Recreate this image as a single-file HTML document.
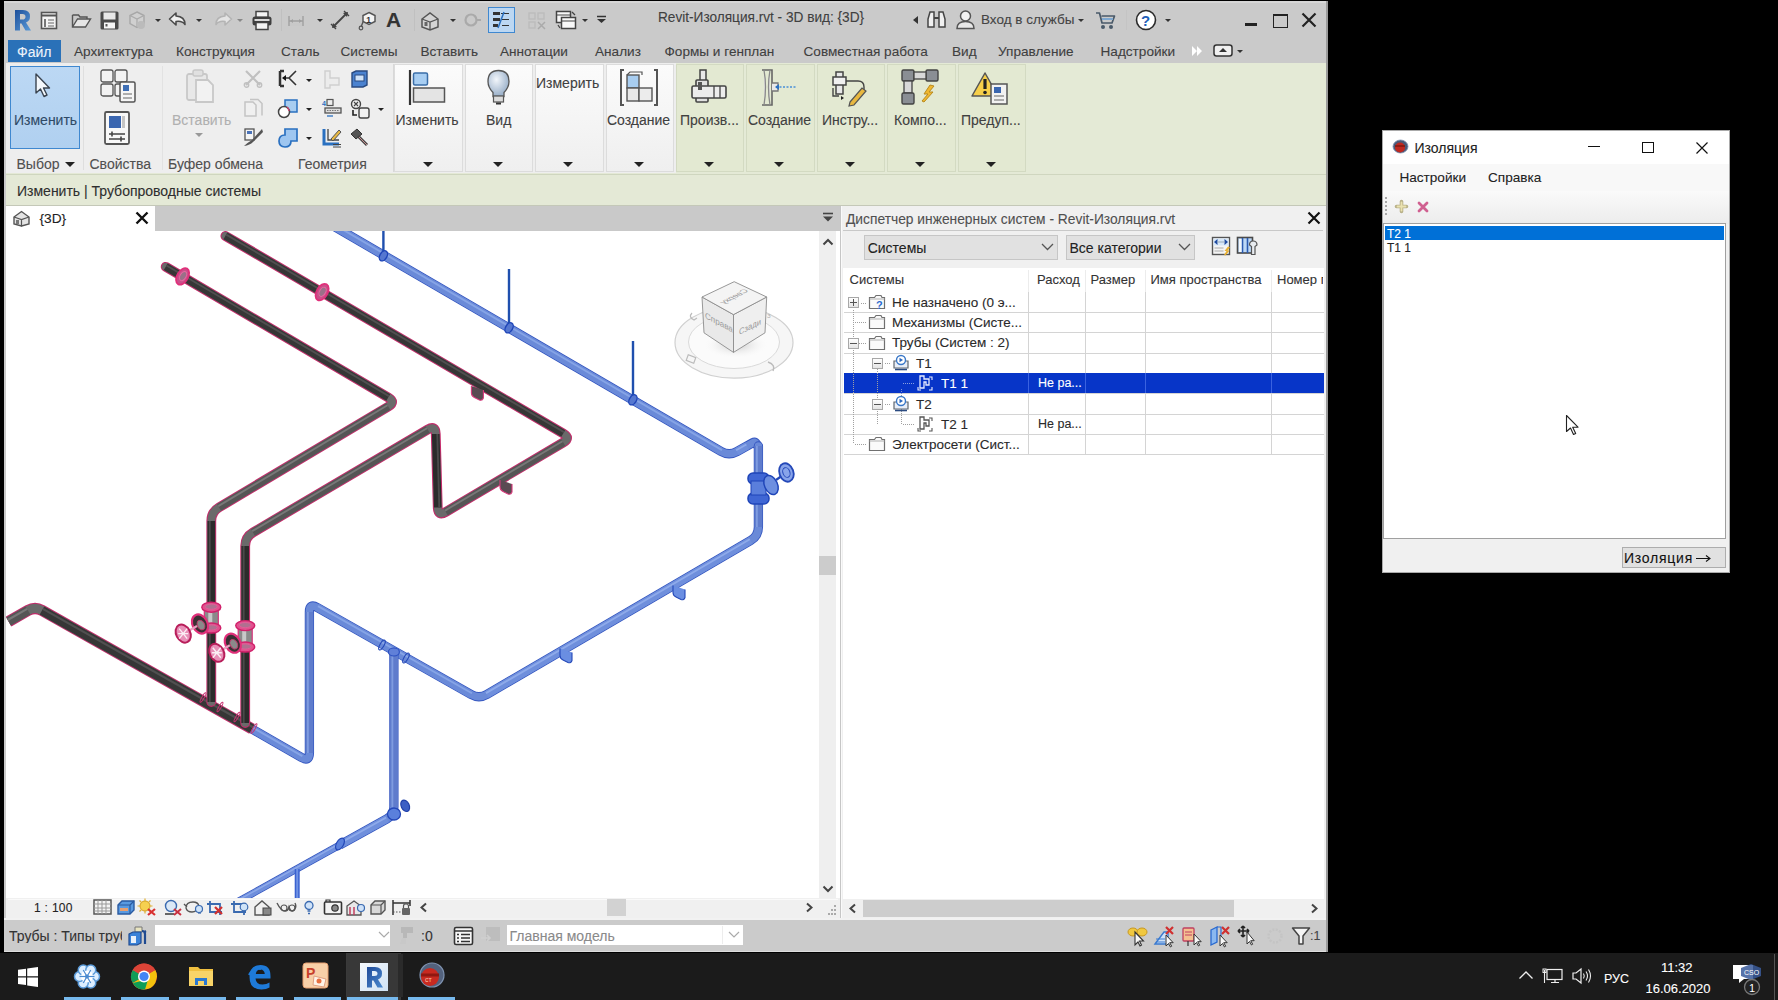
<!DOCTYPE html>
<html><head><meta charset="utf-8">
<style>
*{margin:0;padding:0;box-sizing:border-box}
html,body{width:1778px;height:1000px;overflow:hidden;background:#000;font-family:"Liberation Sans",sans-serif;color:#333}
.a{position:absolute}
.t{position:absolute;white-space:nowrap;line-height:1;color:#3a3a3a;-webkit-text-stroke:0.1px currentColor}
svg{position:absolute;overflow:visible}
.tab{font-size:13.6px;top:44.7px;color:#404040}
.pl{font-size:14px;top:156.5px;color:#505050}
.bl{font-size:14px;top:113.2px;color:#404040}
.pn{position:absolute;top:64px;height:108px;background:linear-gradient(#fbfbfb,#efefef);border:1px solid #dcdcdc}
.pg{position:absolute;top:64px;height:108px;background:#e3e9d2;border:1px solid #d3dac2}
.dd{position:absolute;width:0;height:0;border-left:5px solid transparent;border-right:5px solid transparent;border-top:5px solid #222}
.row{position:absolute;left:844px;width:480px;height:1px;background:#d6d6d6}
.rt{font-size:14px;color:#333}
</style></head><body>
<!-- ===== REVIT WINDOW ===== -->
<div class="a" style="left:4px;top:1px;width:1322px;height:951px;background:#cacaca"></div><div class="a" style="left:4px;top:1px;width:1322px;height:2px;background:#d6d6d6"></div>
<div class="a" style="left:1326px;top:1px;width:2px;height:951px;background:#9a9a9a"></div>

<!-- title -->
<div class="t" style="left:657.5px;top:9.8px;font-size:14.5px;color:#404040;transform:scaleX(0.94);transform-origin:0 0">Revit-Изоляция.rvt - 3D вид: {3D}</div>


<svg style="left:13px;top:8px" width="20" height="24"><defs><linearGradient id="rg" x1="0" y1="0" x2="1" y2="1"><stop offset="0" stop-color="#1d4f9a"/><stop offset="1" stop-color="#5a9ad8"/></linearGradient></defs><path d="M2,2 h8 q7,0 7,6.5 q0,4.5 -4,6 l5,8 h-5.5 l-4,-7 h-1.5 v7 h-5 z M7,6 v5.5 h2.5 q3,0 3,-2.8 q0,-2.7 -3,-2.7 z" fill="url(#rg)"/></svg>
<svg style="left:40px;top:11px" width="19" height="19"><rect x="1.5" y="1.5" width="15" height="16" fill="#f4f4f4" stroke="#555" stroke-width="1.6"/><path d="M1.5,4.5 h15" stroke="#555" stroke-width="2"/><path d="M5,8 v8" stroke="#777" stroke-width="2"/><path d="M8,9 h6 M8,12 h6 M8,15 h6" stroke="#666" stroke-width="1.2"/></svg>
<svg style="left:71px;top:12px" width="22" height="17"><path d="M1.5,3 h6 l1.5,2 h7 v3" fill="none" stroke="#555" stroke-width="1.4"/><path d="M1.5,3 v12 h13 l5,-8 h-13 l-5,8" fill="#e6e6e6" stroke="#555" stroke-width="1.4"/></svg>
<svg style="left:99px;top:10px" width="21" height="21"><rect x="1.5" y="1.5" width="18" height="18" rx="1.5" fill="#4a4a4a"/><rect x="4.5" y="2.5" width="12" height="7" fill="#e8e8e8"/><rect x="5" y="12.5" width="11" height="6" fill="#f6f6f6"/><rect x="6.5" y="14" width="2" height="2.5" fill="#555"/></svg>
<svg style="left:127px;top:10px" width="21" height="20"><path d="M10,2 l7,3.5 v8 l-7,4 l-7,-4 v-8 z" fill="#d0d0d0" stroke="#a8a8a8" stroke-width="1.4"/><path d="M3,5.5 l7,3.5 l7,-3.5 M10,9 v8.5" fill="none" stroke="#aaa" stroke-width="1.2"/><circle cx="14" cy="15" r="4" fill="#bbb"/></svg>
<div class="dd" style="left:155px;top:19px;border-width:3px 3px 0 3px;border-top-color:#333"></div>
<svg style="left:168px;top:11px" width="21" height="17"><path d="M8,2 l-6.5,6 l6.5,6 v-3.5 q6,-1 9,3 q0,-8 -9,-8.5 z" fill="#f0f0f0" stroke="#4a4a4a" stroke-width="1.6" stroke-linejoin="round"/></svg>
<div class="dd" style="left:196px;top:19px;border-width:3px 3px 0 3px;border-top-color:#333"></div>
<svg style="left:212px;top:11px" width="21" height="17"><path d="M13,2 l6.5,6 l-6.5,6 v-3.5 q-6,-1 -9,3 q0,-8 9,-8.5 z" fill="#e4e4e4" stroke="#b4b4b4" stroke-width="1.6" stroke-linejoin="round"/></svg>
<div class="dd" style="left:237px;top:19px;border-width:3px 3px 0 3px;border-top-color:#888"></div>
<svg style="left:251px;top:10px" width="22" height="21"><rect x="5" y="1.5" width="12" height="6" fill="#f4f4f4" stroke="#444" stroke-width="1.5"/><rect x="1.5" y="6.5" width="19" height="9" rx="2.5" fill="#3f3f3f"/><rect x="5" y="12.5" width="12" height="7" fill="#f4f4f4" stroke="#444" stroke-width="1.5"/><rect x="3.5" y="9" width="15" height="2" fill="#d8d8d8"/></svg>
<div class="a" style="left:281px;top:9px;width:1px;height:22px;background:#c0c0c0"></div>
<svg style="left:288px;top:13px" width="16" height="15"><path d="M1,3 v10 M15,3 v10 M1,8 h14" stroke="#a0a0a0" stroke-width="1.4" fill="none"/><path d="M2,8 l3,-2 v4z M14,8 l-3,-2 v4z" fill="#a0a0a0"/><rect x="2" y="10" width="12" height="3" fill="#c8c8c8"/></svg>
<div class="dd" style="left:317px;top:19px;border-width:3px 3px 0 3px;border-top-color:#333"></div>
<svg style="left:330px;top:10px" width="20" height="20"><path d="M3,17 l14,-14" stroke="#444" stroke-width="1.8"/><path d="M2,18 l1,-5 l4,4z M18,2 l-1,5 l-4,-4z" fill="#444"/><path d="M1,14 l5,5 M14,1 l5,5" stroke="#444" stroke-width="1.4"/></svg>
<svg style="left:358px;top:11px" width="20" height="19"><path d="M11,1.5 l6,3 v6 l-6,3 l-6,-3 v-6z" fill="#f4f4f4" stroke="#555" stroke-width="1.5"/><text x="8.3" y="11.5" font-family="Liberation Sans" font-size="8.5" font-weight="bold" fill="#333">1</text><path d="M5,11 l-2,5" stroke="#555" stroke-width="1.4"/><circle cx="3" cy="17" r="1.8" fill="none" stroke="#555" stroke-width="1.2"/></svg>
<div class="t" style="left:386px;top:9px;font-size:21px;font-weight:bold;color:#333">A</div>
<div class="a" style="left:414px;top:9px;width:1px;height:22px;background:#c0c0c0"></div>
<svg style="left:420px;top:11px" width="20" height="19"><path d="M2,8 l8,-6 l8,6 v8 l-8,3 l-8,-3z" fill="#d4d4d4" stroke="#555" stroke-width="1.5"/><path d="M2,8 l8,3 l8,-3 M10,11 v8" fill="none" stroke="#555" stroke-width="1.3"/><rect x="4.5" y="11" width="3" height="4" fill="#666"/></svg>
<div class="dd" style="left:450px;top:19px;border-width:3px 3px 0 3px;border-top-color:#333"></div>
<svg style="left:464px;top:12px" width="18" height="16"><circle cx="7" cy="8" r="5.5" fill="none" stroke="#aaa" stroke-width="2.2"/><path d="M12,8 l5,0" stroke="#aaa" stroke-width="2"/></svg>
<div class="a" style="left:488px;top:7px;width:27px;height:26px;background:#bcd7f2;border:1px solid #3f88d0"></div>
<svg style="left:491px;top:11px" width="21" height="18"><path d="M2,2.5 h7 M2,8.5 h7 M2,14.5 h5" stroke="#333" stroke-width="3"/><path d="M10,2.5 h8 M11,8.5 h7 M11,14.5 h7" stroke="#333" stroke-width="1.2"/><path d="M13,1 l-6,16" stroke="#2a70c0" stroke-width="1.5"/></svg>
<svg style="left:527px;top:11px" width="20" height="19"><rect x="2" y="2" width="6" height="6" fill="none" stroke="#bbb" stroke-width="1.3"/><rect x="11" y="2" width="6" height="6" fill="none" stroke="#bbb" stroke-width="1.3"/><rect x="2" y="11" width="6" height="6" fill="none" stroke="#bbb" stroke-width="1.3"/><path d="M11,11 l7,7 M18,11 l-7,7" stroke="#aaa" stroke-width="1.5"/></svg>
<svg style="left:555px;top:10px" width="22" height="21"><rect x="1.5" y="1.5" width="14" height="11" fill="#f8f8f8" stroke="#444" stroke-width="1.5"/><rect x="6.5" y="7.5" width="14" height="11" fill="#f8f8f8" stroke="#444" stroke-width="1.5"/><path d="M1.5,5 h14 M6.5,11 h14" stroke="#444" stroke-width="1.2"/><path d="M17,2 l3,3 M3,15 l2,3" stroke="#444" stroke-width="1.3"/></svg>
<div class="dd" style="left:582px;top:19px;border-width:3px 3px 0 3px;border-top-color:#333"></div>
<svg style="left:596px;top:15px" width="11" height="9"><path d="M1,1.5 h9" stroke="#333" stroke-width="1.5"/><path d="M1,4 h9 l-4.5,4z" fill="#333"/></svg>
<div class="dd" style="left:914px;top:17px;border-width:0px 0px 0 0px;border-top-color:#333"></div>
<svg style="left:912px;top:15px" width="7" height="10"><path d="M6,1 l-5,4 l5,4z" fill="#333"/></svg>
<svg style="left:926px;top:10px" width="21" height="19"><path d="M2,17 v-8 l2,-7 h4 v15z M19,17 v-8 l-2,-7 h-4 v15z" fill="#f0f0f0" stroke="#444" stroke-width="1.5"/><path d="M8,8 h5" stroke="#444" stroke-width="2"/></svg>
<svg style="left:955px;top:9px" width="21" height="21"><circle cx="10.5" cy="7" r="5" fill="#f2f2f2" stroke="#555" stroke-width="1.5"/><path d="M2,19.5 q0,-7 8.5,-7 q8.5,0 8.5,7z" fill="#e8e8e8" stroke="#555" stroke-width="1.5"/></svg>
<div class="t" style="left:981px;top:12.5px;font-size:13.5px;color:#444">Вход в службы</div>
<div class="dd" style="left:1078px;top:19px;border-width:3px 3px 0 3px;border-top-color:#333"></div>
<svg style="left:1095px;top:11px" width="22" height="19"><path d="M1,2 h3.5 l2.5,10 h10 l2.5,-7 h-13" fill="none" stroke="#4a5a6a" stroke-width="1.7" stroke-linejoin="round"/><circle cx="8" cy="16" r="2" fill="#4a5a6a"/><circle cx="16" cy="16" r="2" fill="#4a5a6a"/><path d="M7,8 h11" stroke="#7fa8d0" stroke-width="2"/></svg>
<div class="a" style="left:1126px;top:10px;width:1px;height:20px;background:#c4c4c4"></div>
<svg style="left:1135px;top:9px" width="22" height="22"><circle cx="11" cy="11" r="9.5" fill="#fff" stroke="#2a2a2a" stroke-width="1.6"/><text x="6" y="16.5" font-family="Liberation Sans" font-size="15" font-weight="bold" fill="#1f5fb8">?</text></svg>
<div class="dd" style="left:1165px;top:19px;border-width:3px 3px 0 3px;border-top-color:#333"></div>
<div class="a" style="left:1245px;top:23px;width:12px;height:3px;background:#222"></div>
<div class="a" style="left:1273px;top:14px;width:15px;height:14px;border:1.6px solid #222;border-top-width:2.4px"></div>
<svg style="left:1301px;top:12px" width="16" height="16"><path d="M1.5,1.5 l13,13 M14.5,1.5 l-13,13" stroke="#222" stroke-width="2.2"/></svg>
<svg style="left:1191px;top:45px" width="13" height="12"><path d="M1,1 l5,5 l-5,5z M6,1 l5,5 l-5,5z" fill="#fff"/></svg>
<svg style="left:1213px;top:44px" width="20" height="13"><rect x="1" y="1" width="18" height="11" rx="2.5" fill="#f0f0f0" stroke="#333" stroke-width="1.5"/><path d="M6,8 l4,-4 l4,4z" fill="#333"/></svg>
<div class="dd" style="left:1237px;top:50px;border-width:3px 3px 0 3px;border-top-color:#333"></div>
<!-- tabs row -->
<div class="a" style="left:8px;top:40px;width:53px;height:22px;background:#2a71b8"></div>
<div class="t" style="left:17px;top:44.7px;font-size:14px;color:#eef4fb">Файл</div>
<div class="t tab" style="left:74px">Архитектура</div>
<div class="t tab" style="left:176px">Конструкция</div>
<div class="t tab" style="left:281px">Сталь</div>
<div class="t tab" style="left:340.5px">Системы</div>
<div class="t tab" style="left:420.5px">Вставить</div>
<div class="t tab" style="left:500px">Аннотации</div>
<div class="t tab" style="left:595px">Анализ</div>
<div class="t tab" style="left:664.5px">Формы и генплан</div>
<div class="t tab" style="left:803.5px">Совместная работа</div>
<div class="t tab" style="left:952px">Вид</div>
<div class="t tab" style="left:998px">Управление</div>
<div class="t tab" style="left:1100.5px">Надстройки</div>

<!-- ribbon -->
<div class="a" style="left:6px;top:63px;width:670px;height:110px;background:#eeeeee"></div>
<div class="a" style="left:676px;top:63px;width:650px;height:110px;background:#e4ead6"></div>
<div class="a" style="left:83px;top:66px;width:1px;height:104px;background:#dedede"></div>
<div class="a" style="left:162px;top:66px;width:1px;height:104px;background:#e2e2e2"></div>
<div class="a" style="left:393px;top:64px;width:1px;height:108px;background:#d8d8d8"></div>
<!-- selected Изменить -->
<div class="a" style="left:10px;top:66px;width:70px;height:83px;background:linear-gradient(#bcd8f4,#b0d0f0);border:1px solid #3f88d0"></div>
<div class="t bl" style="left:14px;color:#2f4a66">Изменить</div>
<div class="t pl" style="left:16.5px">Выбор</div>
<div class="dd" style="left:65px;top:162px"></div>
<div class="t pl" style="left:89.5px">Свойства</div>
<div class="t" style="left:172px;top:113.2px;font-size:14px;color:#b0b0b0">Вставить</div>
<div class="dd" style="left:195px;top:133px;border-top-color:#999;border-width:4px 4px 0 4px"></div>
<div class="t pl" style="left:168px">Буфер обмена</div>
<div class="t pl" style="left:298px">Геометрия</div>

<!-- collapsed panels -->
<div class="pn" style="left:394px;width:69px"></div>
<div class="pn" style="left:465px;width:68px"></div>
<div class="pn" style="left:535px;width:69px"></div>
<div class="pn" style="left:606px;width:68px"></div>
<div class="t bl" style="left:395.5px">Изменить</div>
<div class="t bl" style="left:486px">Вид</div>
<div class="t" style="left:536px;top:76.4px;font-size:14px;color:#404040">Измерить</div>
<div class="t bl" style="left:607px">Создание</div>
<div class="pg" style="left:676px;width:68px"></div>
<div class="pg" style="left:746px;width:69px"></div>
<div class="pg" style="left:817px;width:68px"></div>
<div class="pg" style="left:887px;width:69px"></div>
<div class="pg" style="left:958px;width:68px"></div>
<div class="t bl" style="left:680px">Произв...</div>
<div class="t bl" style="left:748px">Создание</div>
<div class="t bl" style="left:822px">Инстру...</div>
<div class="t bl" style="left:894px">Компо...</div>
<div class="t bl" style="left:961px">Предуп...</div>
<div class="dd" style="left:423px;top:162px"></div>
<div class="dd" style="left:493px;top:162px"></div>
<div class="dd" style="left:563px;top:162px"></div>
<div class="dd" style="left:634px;top:162px"></div>
<div class="dd" style="left:704px;top:162px"></div>
<div class="dd" style="left:774px;top:162px"></div>
<div class="dd" style="left:845px;top:162px"></div>
<div class="dd" style="left:915px;top:162px"></div>
<div class="dd" style="left:986px;top:162px"></div>

<svg style="left:34px;top:72px" width="20" height="26"><path d="M2,2 v19 l4.5,-4 l3.5,7.5 l3,-1.5 l-3.5,-7 h6z" fill="#f4f8fc" stroke="#3a4450" stroke-width="1.4" stroke-linejoin="round"/></svg>
<svg style="left:99px;top:68px" width="40" height="36"><g fill="#f2f2f2" stroke="#555" stroke-width="1.3"><rect x="2" y="2" width="12" height="12" rx="2"/><rect x="16" y="2" width="12" height="12" rx="2"/><rect x="2" y="16" width="12" height="12" rx="2"/><rect x="16" y="16" width="12" height="12" rx="2"/></g><rect x="21" y="14" width="15" height="20" rx="1.5" fill="#f6f6f6" stroke="#555" stroke-width="1.5"/><rect x="24" y="17" width="6" height="6" fill="#3f6fb5"/><path d="M24,26 h9 M24,30 h9" stroke="#666" stroke-width="1.2"/></svg>
<svg style="left:103px;top:110px" width="28" height="36"><rect x="2" y="2" width="24" height="32" rx="1.5" fill="#f8f8f8" stroke="#555" stroke-width="1.8"/><rect x="6" y="6" width="12" height="12" fill="#3a66b0"/><rect x="19" y="6" width="3" height="12" fill="#c4c4c4"/><path d="M6,24 h16 M6,29 h16" stroke="#444" stroke-width="1.6"/><path d="M9,21.5 v5 M18,26.5 v5" stroke="#444" stroke-width="1.6"/></svg>
<svg style="left:184px;top:68px" width="32" height="37"><rect x="3" y="6" width="20" height="26" rx="2" fill="#e8e8e8" stroke="#c8c8c8" stroke-width="1.8"/><rect x="9" y="2" width="10" height="6" rx="2" fill="#e0e0e0" stroke="#c8c8c8" stroke-width="1.5"/><path d="M12,12 h12 l5,5 v17 h-17z" fill="#f2f2f2" stroke="#c8c8c8" stroke-width="1.8"/></svg>
<svg style="left:243px;top:69px" width="20" height="19"><path d="M3,2 l14,14 M17,2 l-14,14" stroke="#c0c0c0" stroke-width="2.2"/><circle cx="3.5" cy="16" r="2.2" fill="none" stroke="#c0c0c0" stroke-width="1.4"/><circle cx="16.5" cy="16" r="2.2" fill="none" stroke="#c0c0c0" stroke-width="1.4"/></svg>
<svg style="left:243px;top:98px" width="21" height="20"><path d="M2,4 h8 l3,3 v11 h-11z" fill="#f0f0f0" stroke="#c4c4c4" stroke-width="1.5"/><path d="M7,1.5 h8 l4,4 v12" fill="none" stroke="#c4c4c4" stroke-width="1.5"/></svg>
<svg style="left:243px;top:127px" width="21" height="20"><rect x="2" y="2" width="9" height="11" fill="#f4f4f4" stroke="#555" stroke-width="1.3"/><rect x="4" y="4" width="5" height="3" fill="#4a72b8"/><path d="M19,2 l-10,11 q-5,3 -8,6 q6,-1 9,-4 l10,-10z" fill="#555"/></svg>
<svg style="left:277px;top:69px" width="22" height="19"><path d="M3,2 v15 M3,2 h4 M3,17 h4" stroke="#333" stroke-width="2.5"/><path d="M6,9 h6 l7,-7 M12,9 l7,7" stroke="#333" stroke-width="1.6" fill="none"/><path d="M5,9 l4,-3 v6z" fill="#111"/></svg>
<svg style="left:277px;top:98px" width="22" height="21"><rect x="8" y="2" width="12" height="12" fill="#a8cdf0" stroke="#2a70c0" stroke-width="1.5"/><circle cx="7" cy="14" r="5.5" fill="#fff" stroke="#444" stroke-width="1.5"/><path d="M10,9 a5.5,5.5 0 0 1 2,4" stroke="#d04070" stroke-width="1.3" fill="none"/></svg>
<svg style="left:277px;top:127px" width="22" height="21"><path d="M8,2 h12 v12 h-6 q0,6 -6,6 q-6,0 -6,-6 q0,-6 6,-6z" fill="#9ec6f0" stroke="#2a70c0" stroke-width="1.7"/></svg>
<div class="dd" style="left:306px;top:79px;border-width:3px 3px 0 3px;border-top-color:#222"></div>
<div class="dd" style="left:306px;top:108px;border-width:3px 3px 0 3px;border-top-color:#222"></div>
<div class="dd" style="left:306px;top:137px;border-width:3px 3px 0 3px;border-top-color:#222"></div>
<svg style="left:321px;top:69px" width="22" height="20"><path d="M4,2 h5 v7 h9 v7 h-9 v3 h-5z" fill="#ececec" stroke="#cfcfcf" stroke-width="1.4"/></svg>
<svg style="left:321px;top:98px" width="22" height="21"><text x="1" y="8" font-family="Liberation Sans" font-size="7" font-weight="bold" fill="#2a70c0">4</text><rect x="6" y="1.5" width="6" height="6" fill="none" stroke="#555" stroke-width="1.2"/><rect x="4" y="10" width="16" height="5" fill="#ddd" stroke="#555" stroke-width="1.3"/><path d="M6,12.5 h12" stroke="#777" stroke-dasharray="1.5 1"/><path d="M6,18 h6" stroke="#2a70c0" stroke-width="1.3"/></svg>
<svg style="left:321px;top:127px" width="22" height="21"><path d="M3,2 v15 h15" stroke="#2a70c0" stroke-width="3" fill="none"/><path d="M7,2 v11 h11" stroke="#444" stroke-width="1.3" fill="none"/><path d="M10,12 l8,-9 l2,2 l-8,9z" fill="#e8b840" stroke="#555" stroke-width="1"/><path d="M12,17.5 h8 M12,20 h8" stroke="#444" stroke-width="1.2"/></svg>
<svg style="left:349px;top:69px" width="22" height="20"><path d="M3,4 l4,-2 h11 v14 l-4,2 h-11z" fill="#4a82d0" stroke="#2a4a80" stroke-width="1.4"/><rect x="6" y="6" width="9" height="6" fill="#cfe2f8" stroke="#2a4a80" stroke-width="1"/></svg>
<svg style="left:349px;top:98px" width="22" height="21"><circle cx="7" cy="6" r="4.5" fill="none" stroke="#444" stroke-width="1.4"/><path d="M5,4 l4,4 M9,4 l-4,4" stroke="#444" stroke-width="1.1"/><rect x="10" y="10" width="10" height="10" rx="2" fill="#f2f2f2" stroke="#444" stroke-width="1.4"/><path d="M4,12 v5 h4" stroke="#222" stroke-width="1.6" fill="none"/></svg>
<svg style="left:349px;top:127px" width="22" height="21"><path d="M2,7 l6,-5 l5,5 l-6,5z" fill="#555" stroke="#333" stroke-width="1"/><path d="M9,9 l9,9" stroke="#444" stroke-width="3"/><path d="M10,10 l8,8" stroke="#c89090" stroke-width="1"/></svg>
<div class="dd" style="left:378px;top:108px;border-width:3px 3px 0 3px;border-top-color:#222"></div>
<svg style="left:408px;top:68px" width="38" height="39"><path d="M2,2 v35" stroke="#333" stroke-width="2.2"/><rect x="5.5" y="5" width="14" height="12" rx="1.5" fill="#a8cef2" stroke="#3a6ea8" stroke-width="1.5"/><rect x="5.5" y="20" width="31" height="14" fill="#e4e4e4" stroke="#555" stroke-width="1.5"/></svg>
<svg style="left:486px;top:69px" width="25" height="37"><defs><radialGradient id="bulb" cx="40%" cy="35%" r="60%"><stop offset="0" stop-color="#f2f6fb"/><stop offset="1" stop-color="#9fb4cc"/></radialGradient></defs><path d="M12.5,1.5 q10.5,0 10.5,11 q0,6 -5,11 v4 h-11 v-4 q-5,-5 -5,-11 q0,-11 10.5,-11z" fill="url(#bulb)" stroke="#555" stroke-width="1.3"/><rect x="7.5" y="27" width="10" height="6" fill="#ddd" stroke="#555" stroke-width="1.2"/><path d="M10,34.5 h5" stroke="#333" stroke-width="2"/></svg>
<svg style="left:619px;top:68px" width="40" height="39"><path d="M5,2 h-3 v35 h3 M35,2 h3 v35 h-3" stroke="#555" stroke-width="2" fill="none"/><rect x="8" y="7" width="12" height="13" fill="#a8cdf0" stroke="#555" stroke-width="1.4"/><rect x="8" y="20" width="12" height="13" fill="#e8e8e8" stroke="#555" stroke-width="1.4"/><rect x="20" y="20" width="13" height="13" fill="#ececec" stroke="#555" stroke-width="1.4"/><path d="M8,7 l3,-3 h12 v3" fill="none" stroke="#555" stroke-width="1.2"/></svg>
<svg style="left:690px;top:68px" width="39" height="37"><rect x="10" y="2" width="6" height="14" fill="#e8e8e8" stroke="#444" stroke-width="1.5"/><rect x="6" y="12" width="12" height="22" rx="1" fill="#e0e0e0" stroke="#444" stroke-width="1.6"/><rect x="2" y="18" width="34" height="12" rx="1.5" fill="#ececec" stroke="#444" stroke-width="1.6"/><path d="M24,18 v12 M30,18 v12" stroke="#444" stroke-width="1.3"/><rect x="8" y="14" width="4" height="8" fill="#555"/></svg>
<svg style="left:758px;top:68px" width="40" height="39"><path d="M4,2 h10 v35 h-10" fill="none" stroke="#666" stroke-width="1.6"/><path d="M6,2 q3,17 0,35 M12,2 q-3,17 0,35" fill="#e4e4e4" stroke="#888" stroke-width="1.3"/><path d="M14,15 h6 v8 h-6" fill="#e8e8e8" stroke="#777" stroke-width="1.3"/><path d="M18,19 h20" stroke="#4a90d8" stroke-width="1.6" stroke-dasharray="2 1.5"/><path d="M17,19 l4,-3 v6z" fill="#2a70c0"/></svg>
<svg style="left:830px;top:68px" width="40" height="38"><rect x="6" y="4" width="7" height="22" fill="#e8e8e8" stroke="#444" stroke-width="1.5"/><rect x="3" y="9" width="13" height="8" fill="#f0f0f0" stroke="#444" stroke-width="1.5"/><path d="M16,13 h12 q6,0 6,6 v4" fill="none" stroke="#444" stroke-width="1.4"/><path d="M3,20 v8 h6" fill="none" stroke="#444" stroke-width="1.4"/><path d="M14,30 l-3,-2 v4z M5,28 l3,2" fill="#222"/><path d="M20,34 l12,-14 l4,3 l-12,14 l-5,1z" fill="#e8b840" stroke="#555" stroke-width="1.2"/></svg>
<svg style="left:900px;top:68px" width="40" height="38"><rect x="2" y="2" width="12" height="11" rx="1.5" fill="#8a8e94" stroke="#444" stroke-width="1.4"/><rect x="26" y="2" width="12" height="11" rx="1.5" fill="#8a8e94" stroke="#444" stroke-width="1.4"/><rect x="14" y="4" width="12" height="7" fill="#d8d8d8" stroke="#444" stroke-width="1.3"/><rect x="4" y="13" width="8" height="12" fill="#d8d8d8" stroke="#444" stroke-width="1.3"/><rect x="2" y="25" width="12" height="11" rx="1.5" fill="#8a8e94" stroke="#444" stroke-width="1.4"/><path d="M22,33 l6,-7 h-4 l6,-9 l4,1 l-5,6 h4 l-9,10z" fill="#f0b830" stroke="#b88a20" stroke-width="1"/></svg>
<svg style="left:971px;top:71px" width="38" height="35"><path d="M14,2 l13,23 h-26z" fill="#f6cf4a" stroke="#555" stroke-width="1.5" stroke-linejoin="round"/><path d="M14,8 v10" stroke="#222" stroke-width="3.2"/><circle cx="14" cy="21.5" r="1.8" fill="#222"/><rect x="20" y="13" width="16" height="20" fill="#f2f2f2" stroke="#555" stroke-width="1.5"/><rect x="23" y="16" width="7" height="6" fill="#3a66b0"/><path d="M23,25 h10 M23,29 h10" stroke="#666" stroke-width="1.2"/></svg>
<!-- context bar -->
<div class="a" style="left:6px;top:173px;width:1320px;height:33px;background:#e4e9d6"></div>
<div class="t" style="left:17px;top:184.2px;font-size:14px;color:#2e2e2e">Изменить | Трубопроводные системы</div>
<div class="a" style="left:6px;top:174px;width:1320px;height:1px;background:#cfd6bf"></div>
<div class="a" style="left:6px;top:205px;width:1320px;height:1px;background:#c4c8b8"></div>

<!-- view tab bar -->
<div class="a" style="left:6px;top:206px;width:834px;height:25px;background:#c9c9c9"></div>
<div class="a" style="left:6px;top:206px;width:149px;height:25px;background:#fff"></div>
<div class="t" style="left:39.5px;top:212.2px;font-size:13.7px;color:#222">{3D}</div>

<!-- viewport -->
<div id="vp" class="a" style="left:6px;top:231px;width:813px;height:667px;background:#fff;overflow:hidden"><svg style="left:-6px;top:-231px" width="1778" height="1000"><defs><radialGradient id="cshadow" cx="50%" cy="50%" r="50%"><stop offset="0" stop-color="#c8c8c8"/><stop offset="1" stop-color="#fff" stop-opacity="0"/></radialGradient></defs>
<ellipse cx="734" cy="342.6" rx="59" ry="35.5" fill="#f6f6f6" stroke="#d0d0d0" stroke-width="1.2"/>
<ellipse cx="734" cy="342" rx="45.5" ry="26.5" fill="#fbfbfb" stroke="#dadada" stroke-width="1"/>
<ellipse cx="736" cy="345" rx="34" ry="14" fill="url(#cshadow)"/>
<polygon points="702,297 733.5,314.6 733.5,352.4 704,332.8" fill="#e9e9e9" stroke="#8c8c8c" stroke-width="0.9"/>
<polygon points="733.5,314.6 766.7,297 765,332.8 733.5,352.4" fill="#efefef" stroke="#8c8c8c" stroke-width="0.9"/>
<polygon points="734.2,281.7 766.7,297 733.5,314.6 702,297" fill="#f4f4f4" stroke="#8c8c8c" stroke-width="0.9"/>
<text x="0" y="0" font-family="Liberation Sans" font-size="8.5" fill="#9a9a9a" transform="matrix(0.95,0.5,0,1,705,318)">Справа</text>
<text x="0" y="0" font-family="Liberation Sans" font-size="8.5" fill="#9a9a9a" transform="matrix(0.9,-0.45,0,1,739,335)">Сзади</text>
<text x="0" y="0" font-family="Liberation Sans" font-size="8" fill="#9a9a9a" transform="matrix(-0.95,0.5,0.9,0.45,749,291)">Сверху</text>
<path d="M692,313 q-4,4 2,7 l3,-2" fill="none" stroke="#bbb" stroke-width="1.2"/>
<path d="M768,362 q8,3 5,9" fill="none" stroke="#bbb" stroke-width="1.5"/>
<rect x="687" y="356" width="8" height="6" fill="none" stroke="#bbb" stroke-width="1.2" transform="rotate(20 691 359)"/>
<text x="767" y="318" font-family="Liberation Sans" font-size="6" fill="#b0b0b0">З</text>
<path d="M330.00,224.00 L721.22,451.48 Q729.00,456.00 736.86,451.62 L752.46,442.92 Q755.00,441.50 756.53,443.98 L758.40,447.00" fill="none" stroke="#3456c0" stroke-width="9.30" stroke-linecap="round" stroke-linejoin="round" />
<path d="M330.00,224.00 L721.22,451.48 Q729.00,456.00 736.86,451.62 L752.46,442.92 Q755.00,441.50 756.53,443.98 L758.40,447.00" fill="none" stroke="#6a8ad8" stroke-width="7.50" stroke-linecap="round" stroke-linejoin="round" />
<path d="M330.00,224.00 L721.22,451.48" fill="none" stroke="#6a8ad8" stroke-width="7.60" stroke-linecap="butt" stroke-linejoin="round" />
<path d="M330.00,224.00 L721.22,451.48" fill="none" stroke="#86a4e6" stroke-width="1.87" stroke-linecap="butt" stroke-linejoin="round" transform="translate(0.77,-1.32)"/>
<path d="M736.86,451.62 L747.14,445.88" fill="none" stroke="#6f8fdc" stroke-width="7.60" stroke-linecap="butt" stroke-linejoin="round" />
<path d="M736.86,451.62 L747.14,445.88" fill="none" stroke="#8eaaea" stroke-width="1.87" stroke-linecap="butt" stroke-linejoin="round" transform="translate(-0.75,-1.34)"/>
<path d="M756.53,443.98 L758.40,447.00" fill="none" stroke="#6a8ad8" stroke-width="7.60" stroke-linecap="butt" stroke-linejoin="round" />
<path d="M756.53,443.98 L758.40,447.00" fill="none" stroke="#86a4e6" stroke-width="1.87" stroke-linecap="butt" stroke-linejoin="round" transform="translate(1.30,-0.80)"/>
<path d="M758.40,446.00 L758.40,527.00 Q758.40,536.00 750.63,540.54 L486.77,694.46 Q479.00,699.00 471.17,694.57 L317.23,607.43 Q309.40,603.00 309.40,612.00 L309.40,753.00 Q309.40,762.00 301.60,757.51 L252.00,729.00" fill="none" stroke="#3456c0" stroke-width="9.30" stroke-linecap="round" stroke-linejoin="round" />
<path d="M758.40,446.00 L758.40,527.00 Q758.40,536.00 750.63,540.54 L486.77,694.46 Q479.00,699.00 471.17,694.57 L317.23,607.43 Q309.40,603.00 309.40,612.00 L309.40,753.00 Q309.40,762.00 301.60,757.51 L252.00,729.00" fill="none" stroke="#6a8ad8" stroke-width="7.50" stroke-linecap="round" stroke-linejoin="round" />
<path d="M758.40,446.00 L758.40,527.00" fill="none" stroke="#5f7ccc" stroke-width="7.60" stroke-linecap="butt" stroke-linejoin="round" />
<path d="M758.40,446.00 L758.40,527.00" fill="none" stroke="#7f9ce0" stroke-width="1.87" stroke-linecap="butt" stroke-linejoin="round" transform="translate(-1.53,0.00)"/>
<path d="M750.63,540.54 L486.77,694.46" fill="none" stroke="#6f8fdc" stroke-width="7.60" stroke-linecap="butt" stroke-linejoin="round" />
<path d="M750.63,540.54 L486.77,694.46" fill="none" stroke="#8eaaea" stroke-width="1.87" stroke-linecap="butt" stroke-linejoin="round" transform="translate(-0.77,-1.32)"/>
<path d="M471.17,694.57 L317.23,607.43" fill="none" stroke="#6a8ad8" stroke-width="7.60" stroke-linecap="butt" stroke-linejoin="round" />
<path d="M471.17,694.57 L317.23,607.43" fill="none" stroke="#86a4e6" stroke-width="1.87" stroke-linecap="butt" stroke-linejoin="round" transform="translate(0.75,-1.33)"/>
<path d="M309.40,612.00 L309.40,753.00" fill="none" stroke="#5f7ccc" stroke-width="7.60" stroke-linecap="butt" stroke-linejoin="round" />
<path d="M309.40,612.00 L309.40,753.00" fill="none" stroke="#7f9ce0" stroke-width="1.87" stroke-linecap="butt" stroke-linejoin="round" transform="translate(-1.53,0.00)"/>
<path d="M301.60,757.51 L252.00,729.00" fill="none" stroke="#6a8ad8" stroke-width="7.60" stroke-linecap="butt" stroke-linejoin="round" />
<path d="M301.60,757.51 L252.00,729.00" fill="none" stroke="#86a4e6" stroke-width="1.87" stroke-linecap="butt" stroke-linejoin="round" transform="translate(0.76,-1.33)"/>
<line x1="383.4" y1="229" x2="383.4" y2="256" stroke="#1f4fae" stroke-width="2.4"/>
<line x1="509" y1="269" x2="509" y2="328" stroke="#1f4fae" stroke-width="2.4"/>
<line x1="633" y1="341" x2="633" y2="400" stroke="#1f4fae" stroke-width="2.4"/>
<ellipse cx="383.4" cy="255.8" rx="3.5" ry="5.5" transform="rotate(30 383.4 255.8)" fill="#5577d0" stroke="#1f45b8" stroke-width="1.4" />
<ellipse cx="509.1" cy="327.8" rx="3.5" ry="5.5" transform="rotate(30 509.1 327.8)" fill="#5577d0" stroke="#1f45b8" stroke-width="1.4" />
<ellipse cx="632.9" cy="399.8" rx="3.5" ry="5.5" transform="rotate(30 632.9 399.8)" fill="#5577d0" stroke="#1f45b8" stroke-width="1.4" />
<path d="M393.90,651.50 L393.90,807.00 Q393.90,815.00 386.90,818.88 L339.80,845.00" fill="none" stroke="#3456c0" stroke-width="9.30" stroke-linecap="butt" stroke-linejoin="round" />
<path d="M393.90,651.50 L393.90,807.00 Q393.90,815.00 386.90,818.88 L339.80,845.00" fill="none" stroke="#6a8ad8" stroke-width="7.50" stroke-linecap="butt" stroke-linejoin="round" />
<path d="M393.90,651.50 L393.90,807.00" fill="none" stroke="#5f7ccc" stroke-width="7.60" stroke-linecap="butt" stroke-linejoin="round" />
<path d="M393.90,651.50 L393.90,807.00" fill="none" stroke="#7f9ce0" stroke-width="1.87" stroke-linecap="butt" stroke-linejoin="round" transform="translate(-1.53,0.00)"/>
<path d="M386.90,818.88 L339.80,845.00" fill="none" stroke="#6f8fdc" stroke-width="7.60" stroke-linecap="butt" stroke-linejoin="round" />
<path d="M386.90,818.88 L339.80,845.00" fill="none" stroke="#8eaaea" stroke-width="1.87" stroke-linecap="butt" stroke-linejoin="round" transform="translate(-0.74,-1.34)"/>
<path d="M339.80,845.00 L230.00,906.00" fill="none" stroke="#3456c0" stroke-width="7.30" stroke-linecap="butt" stroke-linejoin="round" />
<path d="M339.80,845.00 L230.00,906.00" fill="none" stroke="#6a8ad8" stroke-width="5.50" stroke-linecap="butt" stroke-linejoin="round" />
<path d="M339.80,845.00 L230.00,906.00" fill="none" stroke="#6f8fdc" stroke-width="5.60" stroke-linecap="butt" stroke-linejoin="round" />
<path d="M339.80,845.00 L230.00,906.00" fill="none" stroke="#8eaaea" stroke-width="1.43" stroke-linecap="butt" stroke-linejoin="round" transform="translate(-0.57,-1.02)"/>
<line x1="297.2" y1="869" x2="297.2" y2="900" stroke="#3a62d0" stroke-width="5"/>
<line x1="297.2" y1="869" x2="297.2" y2="900" stroke="#6f92e4" stroke-width="2"/>
<ellipse cx="393.9" cy="652" rx="5.5" ry="4" transform="rotate(0 393.9 652)" fill="#6080d8" stroke="#2c50c0" stroke-width="1.2" />
<ellipse cx="406" cy="658" rx="2" ry="5.5" transform="rotate(30 406 658)" fill="none" stroke="#2448b8" stroke-width="1.1" />
<ellipse cx="382" cy="645" rx="2" ry="5.5" transform="rotate(30 382 645)" fill="none" stroke="#2448b8" stroke-width="1.1" />
<path d="M673,585.5 l0,7 q0,3 3,4.5 l5,2.5 q3,1 4,-2 l0,-8" fill="#6a8ee2" stroke="#2448b8" stroke-width="1.1"/>
<path d="M560,648.5 l0,7 q0,3 3,4.5 l5,2.5 q3,1 4,-2 l0,-8" fill="#6a8ee2" stroke="#2448b8" stroke-width="1.1"/>
<ellipse cx="340" cy="844" rx="3.5" ry="6.5" transform="rotate(30 340 844)" fill="#5a80dc" stroke="#2448b8" stroke-width="1.2" />
<rect x="748" y="473" width="21" height="11" rx="5" fill="#3f66d4" stroke="#1f45b8" stroke-width="1.5"/>
<rect x="748" y="493" width="21" height="11" rx="5" fill="#3f66d4" stroke="#1f45b8" stroke-width="1.5"/>
<rect x="751" y="481" width="15" height="14" fill="#5a7fdc" stroke="#1f45b8" stroke-width="1"/>
<ellipse cx="771" cy="485" rx="6.5" ry="10" transform="rotate(-25 771 485)" fill="#6d8fe0" stroke="#1f45b8" stroke-width="1.5" />
<line x1="776" y1="480" x2="783" y2="475" stroke="#2448b8" stroke-width="2.2"/>
<ellipse cx="786.4" cy="472.5" rx="7" ry="9.5" transform="rotate(-20 786.4 472.5)" fill="#88a4ea" stroke="#2448b8" stroke-width="1.8" />
<ellipse cx="786.4" cy="472.5" rx="3.5" ry="5" transform="rotate(-20 786.4 472.5)" fill="none" stroke="#2448b8" stroke-width="1" />
<ellipse cx="405.2" cy="805.8" rx="4" ry="6" transform="rotate(-25 405.2 805.8)" fill="#3c5fc4" stroke="#1f3fa8" stroke-width="1.2" />
<ellipse cx="394" cy="814" rx="6.5" ry="6" transform="rotate(0 394 814)" fill="#5a80dc" stroke="#2448b8" stroke-width="1.3" />
<path d="M8.60,621.50 L28.04,610.45 Q35.00,606.50 41.97,610.43 L252.00,728.80" fill="none" stroke="#c42a6a" stroke-width="11.30" stroke-linecap="butt" stroke-linejoin="round" />
<path d="M8.60,621.50 L28.04,610.45 Q35.00,606.50 41.97,610.43 L252.00,728.80" fill="none" stroke="#6a6a6a" stroke-width="9.20" stroke-linecap="butt" stroke-linejoin="round" />
<path d="M8.60,621.50 L28.04,610.45" fill="none" stroke="#555555" stroke-width="9.10" stroke-linecap="butt" stroke-linejoin="round" />
<path d="M8.60,621.50 L28.04,610.45" fill="none" stroke="#787878" stroke-width="2.20" stroke-linecap="butt" stroke-linejoin="round" transform="translate(-0.89,-1.57)"/>
<path d="M41.97,610.43 L252.00,728.80" fill="none" stroke="#363636" stroke-width="9.10" stroke-linecap="butt" stroke-linejoin="round" />
<path d="M41.97,610.43 L252.00,728.80" fill="none" stroke="#505050" stroke-width="2.20" stroke-linecap="butt" stroke-linejoin="round" transform="translate(0.88,-1.57)"/>
<path d="M165.70,266.80 L388.24,397.44 Q396.00,402.00 388.27,406.61 L219.03,507.39 Q211.30,512.00 211.30,521.00 L211.30,702.00" fill="none" stroke="#c42a6a" stroke-width="9.80" stroke-linecap="round" stroke-linejoin="round" />
<path d="M165.70,266.80 L388.24,397.44 Q396.00,402.00 388.27,406.61 L219.03,507.39 Q211.30,512.00 211.30,521.00 L211.30,702.00" fill="none" stroke="#6a6a6a" stroke-width="7.70" stroke-linecap="round" stroke-linejoin="round" />
<path d="M165.70,266.80 L388.24,397.44" fill="none" stroke="#363636" stroke-width="7.60" stroke-linecap="butt" stroke-linejoin="round" />
<path d="M165.70,266.80 L388.24,397.44" fill="none" stroke="#505050" stroke-width="1.87" stroke-linecap="butt" stroke-linejoin="round" transform="translate(0.77,-1.32)"/>
<path d="M388.27,406.61 L219.03,507.39" fill="none" stroke="#555555" stroke-width="7.60" stroke-linecap="butt" stroke-linejoin="round" />
<path d="M388.27,406.61 L219.03,507.39" fill="none" stroke="#787878" stroke-width="1.87" stroke-linecap="butt" stroke-linejoin="round" transform="translate(-0.78,-1.31)"/>
<path d="M211.30,521.00 L211.30,702.00" fill="none" stroke="#2b2b2b" stroke-width="7.60" stroke-linecap="butt" stroke-linejoin="round" />
<path d="M211.30,521.00 L211.30,702.00" fill="none" stroke="#4a4a4a" stroke-width="1.87" stroke-linecap="butt" stroke-linejoin="round" transform="translate(-1.53,0.00)"/>
<path d="M225.40,235.90 L563.23,433.46 Q571.00,438.00 563.25,442.57 L445.75,511.93 Q438.00,516.50 437.75,507.50 L435.75,434.00 Q435.50,425.00 427.74,429.56 L252.96,532.44 Q245.20,537.00 245.20,546.00 L245.20,723.00" fill="none" stroke="#c42a6a" stroke-width="9.80" stroke-linecap="round" stroke-linejoin="round" />
<path d="M225.40,235.90 L563.23,433.46 Q571.00,438.00 563.25,442.57 L445.75,511.93 Q438.00,516.50 437.75,507.50 L435.75,434.00 Q435.50,425.00 427.74,429.56 L252.96,532.44 Q245.20,537.00 245.20,546.00 L245.20,723.00" fill="none" stroke="#6a6a6a" stroke-width="7.70" stroke-linecap="round" stroke-linejoin="round" />
<path d="M225.40,235.90 L563.23,433.46" fill="none" stroke="#363636" stroke-width="7.60" stroke-linecap="butt" stroke-linejoin="round" />
<path d="M225.40,235.90 L563.23,433.46" fill="none" stroke="#505050" stroke-width="1.87" stroke-linecap="butt" stroke-linejoin="round" transform="translate(0.77,-1.32)"/>
<path d="M563.25,442.57 L445.75,511.93" fill="none" stroke="#555555" stroke-width="7.60" stroke-linecap="butt" stroke-linejoin="round" />
<path d="M563.25,442.57 L445.75,511.93" fill="none" stroke="#787878" stroke-width="1.87" stroke-linecap="butt" stroke-linejoin="round" transform="translate(-0.78,-1.32)"/>
<path d="M437.75,507.50 L435.75,434.00" fill="none" stroke="#2b2b2b" stroke-width="7.60" stroke-linecap="butt" stroke-linejoin="round" />
<path d="M437.75,507.50 L435.75,434.00" fill="none" stroke="#4a4a4a" stroke-width="1.87" stroke-linecap="butt" stroke-linejoin="round" transform="translate(1.53,-0.04)"/>
<path d="M427.74,429.56 L252.96,532.44" fill="none" stroke="#555555" stroke-width="7.60" stroke-linecap="butt" stroke-linejoin="round" />
<path d="M427.74,429.56 L252.96,532.44" fill="none" stroke="#787878" stroke-width="1.87" stroke-linecap="butt" stroke-linejoin="round" transform="translate(-0.78,-1.32)"/>
<path d="M245.20,546.00 L245.20,723.00" fill="none" stroke="#2b2b2b" stroke-width="7.60" stroke-linecap="butt" stroke-linejoin="round" />
<path d="M245.20,546.00 L245.20,723.00" fill="none" stroke="#4a4a4a" stroke-width="1.87" stroke-linecap="butt" stroke-linejoin="round" transform="translate(-1.53,0.00)"/>
<ellipse cx="182.6" cy="276.4" rx="5.5" ry="9" transform="rotate(30 182.6 276.4)" fill="#c8508a" stroke="#e0307a" stroke-width="1.8" />
<ellipse cx="183.1" cy="276.09999999999997" rx="3" ry="5" transform="rotate(30 183.1 276.09999999999997)" fill="#9a7088" stroke="#e868a0" stroke-width="1" />
<ellipse cx="322.1" cy="292.1" rx="5.5" ry="9" transform="rotate(30 322.1 292.1)" fill="#c8508a" stroke="#e0307a" stroke-width="1.8" />
<ellipse cx="322.6" cy="291.8" rx="3" ry="5" transform="rotate(30 322.6 291.8)" fill="#9a7088" stroke="#e868a0" stroke-width="1" />
<path d="M471.4,386 l0,7 q0,3 3,4.5 l5,2.5 q3,1 4,-2 l0,-8" fill="#5a4a52" stroke="#d83a7c" stroke-width="1.1"/>
<path d="M500,480 l0,7 q0,3 3,4.5 l5,2.5 q3,1 4,-2 l0,-8" fill="#5a4a52" stroke="#d83a7c" stroke-width="1.1"/>
<ellipse cx="203" cy="697.5" rx="1.2" ry="5.5" transform="rotate(30 203 697.5)" fill="none" stroke="#c83070" stroke-width="1" />
<ellipse cx="220" cy="707" rx="1.2" ry="5.5" transform="rotate(30 220 707)" fill="none" stroke="#c83070" stroke-width="1" />
<ellipse cx="237" cy="717" rx="1.2" ry="5.5" transform="rotate(30 237 717)" fill="none" stroke="#c83070" stroke-width="1" />
<ellipse cx="254" cy="728.5" rx="1.2" ry="5.5" transform="rotate(30 254 728.5)" fill="none" stroke="#c83070" stroke-width="1" />
<rect x="204.3" y="609.2" width="14" height="16.799999999999955" fill="#8a8a8a" stroke="#d8307a" stroke-width="1.2"/>
<rect x="208.3" y="610.2" width="4" height="14.799999999999955" fill="#c8c8c8"/>
<ellipse cx="211.3" cy="607.2" rx="9.5" ry="5" transform="rotate(0 211.3 607.2)" fill="#e2508e" stroke="#d0206a" stroke-width="1.4" />
<ellipse cx="211.3" cy="606.7" rx="6" ry="2.6" transform="rotate(0 211.3 606.7)" fill="#b07090" stroke="#e06098" stroke-width="1" />
<ellipse cx="211.3" cy="628" rx="9.5" ry="5" transform="rotate(0 211.3 628)" fill="#e2508e" stroke="#d0206a" stroke-width="1.4" />
<ellipse cx="211.3" cy="627.5" rx="6" ry="2.6" transform="rotate(0 211.3 627.5)" fill="#b07090" stroke="#e06098" stroke-width="1" />
<ellipse cx="200" cy="624" rx="7.5" ry="10" transform="rotate(-28 200 624)" fill="#3a3034" stroke="#e0307a" stroke-width="2.2" />
<ellipse cx="201" cy="625" rx="3.5" ry="5" transform="rotate(-28 201 625)" fill="#8a8a8a" stroke="#c04070" stroke-width="1" />
<line x1="197" y1="626" x2="187.2" y2="631.6" stroke="#e8a0c0" stroke-width="2.2"/>
<ellipse cx="183.2" cy="633.6" rx="7" ry="9.5" transform="rotate(-28 183.2 633.6)" fill="#e890b8" stroke="#b81e5a" stroke-width="2" />
<path d="M179.2,628.6 l8,10 M187.2,628.6 l-8,10 M178.2,633.6 h10" stroke="#fff" stroke-width="1.4" opacity=".85"/>
<rect x="238.2" y="627.6" width="14" height="17.399999999999977" fill="#8a8a8a" stroke="#d8307a" stroke-width="1.2"/>
<rect x="242.2" y="628.6" width="4" height="15.399999999999977" fill="#c8c8c8"/>
<ellipse cx="245.2" cy="625.6" rx="9.5" ry="5" transform="rotate(0 245.2 625.6)" fill="#e2508e" stroke="#d0206a" stroke-width="1.4" />
<ellipse cx="245.2" cy="625.1" rx="6" ry="2.6" transform="rotate(0 245.2 625.1)" fill="#b07090" stroke="#e06098" stroke-width="1" />
<ellipse cx="245.2" cy="647" rx="9.5" ry="5" transform="rotate(0 245.2 647)" fill="#e2508e" stroke="#d0206a" stroke-width="1.4" />
<ellipse cx="245.2" cy="646.5" rx="6" ry="2.6" transform="rotate(0 245.2 646.5)" fill="#b07090" stroke="#e06098" stroke-width="1" />
<ellipse cx="232.8" cy="643.2" rx="7.5" ry="10" transform="rotate(-28 232.8 643.2)" fill="#3a3034" stroke="#e0307a" stroke-width="2.2" />
<ellipse cx="233.8" cy="644.2" rx="3.5" ry="5" transform="rotate(-28 233.8 644.2)" fill="#8a8a8a" stroke="#c04070" stroke-width="1" />
<line x1="229.8" y1="645.2" x2="220.8" y2="650.8" stroke="#e8a0c0" stroke-width="2.2"/>
<ellipse cx="216.8" cy="652.8" rx="7" ry="9.5" transform="rotate(-28 216.8 652.8)" fill="#e890b8" stroke="#b81e5a" stroke-width="2" />
<path d="M212.8,647.8 l8,10 M220.8,647.8 l-8,10 M211.8,652.8 h10" stroke="#fff" stroke-width="1.4" opacity=".85"/>
</svg></div>
<!-- v scrollbar -->
<div class="a" style="left:819px;top:231px;width:17px;height:667px;background:#efefef"></div>
<div class="a" style="left:819px;top:556px;width:17px;height:19px;background:#cccccc"></div>
<div class="a" style="left:836px;top:231px;width:4px;height:667px;background:#fff"></div>

<!-- view control bar -->
<div class="a" style="left:6px;top:898px;width:835px;height:20px;background:#f0f0f0"></div>
<div class="a" style="left:8px;top:899px;width:830px;height:1px;background:#fafafa"></div>
<div class="t" style="left:34px;top:901.8px;font-size:12px;letter-spacing:0.3px;color:#222">1 : 100</div>
<div class="a" style="left:607px;top:899px;width:19px;height:17px;background:#d2d2d2"></div>

<!-- status bar -->
<div class="a" style="left:4px;top:918px;width:1322px;height:34px;background:#cbcbcb"></div>
<div class="a" style="left:4px;top:918px;width:1322px;height:2px;background:#f2f2f2"></div>
<div class="a" style="left:4px;top:951px;width:1322px;height:1px;background:#dedede"></div>
<div class="t" style="left:9px;top:929.3px;font-size:14px;color:#333;width:113px;overflow:hidden">Трубы : Типы труб</div>
<div class="a" style="left:155px;top:925px;width:235px;height:21px;background:#fff"></div>
<div class="t" style="left:421px;top:929.3px;font-size:14px;color:#333">:0</div>
<div class="a" style="left:507px;top:925px;width:236px;height:20px;background:#fff"></div>
<div class="t" style="left:509.5px;top:929.1px;font-size:14px;color:#8a8a8a">Главная модель</div>

<svg style="left:12px;top:210px" width="19" height="17"><path d="M2,7 l7.5,-5.5 l7.5,5.5 v7 l-7.5,2 l-7.5,-2z" fill="#e4e4e4" stroke="#555" stroke-width="1.4"/><path d="M2,7 l7.5,2.5 l7.5,-2.5 M9.5,9.5 v7" fill="none" stroke="#555" stroke-width="1.2"/><rect x="4" y="10" width="3" height="4" fill="#777"/></svg>
<svg style="left:135px;top:211px" width="14" height="14"><path d="M1.5,1.5 l11,11 M12.5,1.5 l-11,11" stroke="#111" stroke-width="2.4"/></svg>
<svg style="left:822px;top:212px" width="12" height="11"><path d="M1,1.5 h10" stroke="#444" stroke-width="1.6"/><path d="M1,4.5 h10 l-5,5z" fill="#444"/></svg>
<svg style="left:822px;top:238px" width="12" height="8"><path d="M1.5,6.5 l4.5,-4.5 l4.5,4.5" fill="none" stroke="#444" stroke-width="2"/></svg>
<svg style="left:822px;top:885px" width="12" height="8"><path d="M1.5,1.5 l4.5,4.5 l4.5,-4.5" fill="none" stroke="#444" stroke-width="2"/></svg>
<svg style="left:93px;top:899px" width="19" height="16"><rect x="1" y="1" width="17" height="14" fill="#f4f4f4" stroke="#555" stroke-width="1.5"/><path d="M1,5 h17 M1,9 h17 M1,12 h17 M5,1 v14 M9,1 v14 M13,1 v14" stroke="#999" stroke-width="1"/></svg>
<svg style="left:116px;top:899px" width="20" height="17"><path d="M2,6 l4,-4 h12 v9 l-4,4 h-12z" fill="#5a9ae0" stroke="#2a5aa0" stroke-width="1.4"/><path d="M2,6 h12 v9 M14,6 l4,-4" fill="none" stroke="#2a5aa0" stroke-width="1.2"/><rect x="4" y="9" width="8" height="3" fill="#e8a070"/></svg>
<svg style="left:137px;top:898px" width="20" height="18"><circle cx="8" cy="8" r="5" fill="#f6d050" stroke="#d8a020" stroke-width="1"/><path d="M8,0.5 v2.5 M8,13 v2.5 M0.5,8 h2.5 M13,8 h2.5 M2.5,2.5 l2,2 M11.5,11.5 l2,2 M13.5,2.5 l-2,2 M2.5,13.5 l2,-2" stroke="#e0b030" stroke-width="1.2"/><path d="M11,11 l7,6 M18,11 l-7,6" stroke="#d83030" stroke-width="2.2"/></svg>
<svg style="left:163px;top:899px" width="19" height="17"><circle cx="8" cy="7" r="5.5" fill="#dbe8f6" stroke="#3a6ab0" stroke-width="1.4"/><path d="M2,15 h9" stroke="#444" stroke-width="1.6"/><path d="M11,10 l7,6 M18,10 l-7,6" stroke="#c83040" stroke-width="2"/></svg>
<svg style="left:183px;top:899px" width="21" height="17"><path d="M3,9 q0,-6 7,-6 q5,0 6,4 q-2,6 -7,6 q-5,0 -6,-4z M1,5 l3,3" fill="#f0f0f0" stroke="#555" stroke-width="1.3"/><circle cx="16" cy="10" r="3.5" fill="#d0e4f8" stroke="#3a6ab0" stroke-width="1.2"/><path d="M15,14 h3" stroke="#3a6ab0" stroke-width="1.3"/></svg>
<svg style="left:206px;top:899px" width="18" height="17"><path d="M4,2 v11 h12 M1,5 h13 v11" fill="none" stroke="#3a6ab0" stroke-width="1.8"/><path d="M9,8 l7,7 M16,8 l-7,7" stroke="#d03030" stroke-width="2.2"/></svg>
<svg style="left:230px;top:899px" width="19" height="17"><path d="M4,2 v11 h12 M1,5 h13 v11" fill="none" stroke="#3a6ab0" stroke-width="1.8"/><circle cx="14" cy="8" r="3.8" fill="#d0e4f8" stroke="#3a6ab0" stroke-width="1.2"/></svg>
<svg style="left:253px;top:899px" width="20" height="17"><path d="M2,8 l7,-6 l7,6 v8 h-14z" fill="#f0f0f0" stroke="#555" stroke-width="1.4"/><rect x="10" y="9" width="8" height="7" fill="#888" stroke="#444" stroke-width="1"/></svg>
<svg style="left:276px;top:899px" width="21" height="16"><path d="M1,4 q4,8 8,8 q3,0 4,-4 q2,6 5,3 q3,-3 1,-7" fill="none" stroke="#555" stroke-width="1.4"/><circle cx="8" cy="9" r="3" fill="none" stroke="#555" stroke-width="1.2"/><circle cx="16" cy="9" r="3" fill="none" stroke="#555" stroke-width="1.2"/></svg>
<svg style="left:304px;top:900px" width="10" height="15"><circle cx="5" cy="5.5" r="4" fill="#cfe2f8" stroke="#3a6ab0" stroke-width="1.3"/><path d="M3.5,11 h3 M4,13.5 h2" stroke="#3a6ab0" stroke-width="1.3"/></svg>
<svg style="left:323px;top:899px" width="20" height="17"><rect x="1.5" y="3" width="17" height="12" rx="1" fill="#f4f4f4" stroke="#333" stroke-width="1.6"/><circle cx="12" cy="9" r="3.2" fill="#888" stroke="#333" stroke-width="1.2"/><path d="M3,3 v-2 h4 v2" stroke="#333" stroke-width="1.2" fill="none"/></svg>
<svg style="left:345px;top:899px" width="21" height="17"><path d="M2,7 l7,-5 l7,5 v9 h-14z" fill="#e8e8e8" stroke="#555" stroke-width="1.3"/><path d="M5,8 v8 M9,8 v8" stroke="#c04060" stroke-width="1.5"/><circle cx="16" cy="9" r="3.5" fill="#cfe2f8" stroke="#3a6ab0" stroke-width="1.2"/></svg>
<svg style="left:369px;top:899px" width="18" height="17"><path d="M2,6 l4,-4 h10 v9 l-4,4 h-10z" fill="#d8d8d8" stroke="#555" stroke-width="1.4"/><path d="M2,6 h10 v9 M12,6 l4,-4" fill="none" stroke="#555" stroke-width="1.2"/></svg>
<svg style="left:391px;top:899px" width="21" height="17"><path d="M2,1 v15 M19,1 v6 M2,4 h17" stroke="#333" stroke-width="1.5"/><path d="M2,13 h8" stroke="#555" stroke-dasharray="1.5 1.5"/><rect x="11" y="9" width="8" height="7" rx="1" fill="#666"/><path d="M12.5,9 v-2 q0,-2 2.5,-2 q2.5,0 2.5,2 v2" fill="none" stroke="#555" stroke-width="1.2"/></svg>
<svg style="left:420px;top:902px" width="8" height="11"><path d="M6,1.5 l-4.5,4 l4.5,4" fill="none" stroke="#444" stroke-width="2"/></svg>
<svg style="left:805px;top:902px" width="8" height="11"><path d="M2,1.5 l4.5,4 l-4.5,4" fill="none" stroke="#444" stroke-width="2"/></svg>
<svg style="left:828px;top:904px" width="10" height="12"><g fill="#aaa"><rect x="6" y="1" width="2" height="2"/><rect x="3" y="5" width="2" height="2"/><rect x="6" y="5" width="2" height="2"/><rect x="0" y="9" width="2" height="2"/><rect x="3" y="9" width="2" height="2"/><rect x="6" y="9" width="2" height="2"/></g></svg>

<svg style="left:127px;top:925px" width="22" height="21"><path d="M8,2 h7 v5 h-7z" fill="#e8e4c0" stroke="#777" stroke-width="1"/><path d="M2,9 l4,-2 h8 v11 l-4,2 h-8z" fill="#3a82d8" stroke="#1f4a90" stroke-width="1.2"/><path d="M15,6 q3,0 3,3 v10 M19,6 q-2,1 -1,3" fill="none" stroke="#1f4a90" stroke-width="2.2"/><rect x="4" y="11" width="5" height="7" fill="#e8f0fa"/></svg>
<svg style="left:378px;top:931px" width="12" height="8"><path d="M1,1 l5,5 l5,-5" fill="none" stroke="#aaa" stroke-width="1.2"/></svg>
<svg style="left:396px;top:925px" width="20" height="21"><path d="M5,2 h12 v6 h-6 v5 h-4 v-5 h-2z" fill="#b8b8b8"/><path d="M6,13 h4 v6 h-6z" fill="#c8c8c8"/></svg>
<svg style="left:453px;top:926px" width="21" height="20"><rect x="1.5" y="1.5" width="18" height="17" rx="1.5" fill="#f6f6f6" stroke="#333" stroke-width="1.6"/><path d="M1.5,5 h18" stroke="#333" stroke-width="1.5"/><path d="M4,8.5 h2 M8,8.5 h9 M4,12 h2 M8,12 h9 M4,15.5 h2 M8,15.5 h9" stroke="#333" stroke-width="1.5"/></svg>
<svg style="left:480px;top:926px" width="21" height="20"><rect x="6" y="1" width="14" height="14" fill="#bdbdbd"/><path d="M1,12 h9 M7,9 l3,3 l-3,3" fill="none" stroke="#cfcfcf" stroke-width="1.6"/></svg>
<div class="a" style="left:722px;top:926px;width:1px;height:18px;background:#ededed"></div>
<svg style="left:728px;top:931px" width="12" height="8"><path d="M1,1 l5,5 l5,-5" fill="none" stroke="#aaa" stroke-width="1.2"/></svg>
<svg style="left:1127px;top:926px" width="22" height="20"><ellipse cx="6" cy="6" rx="5" ry="4" fill="#f0c840" stroke="#c89820" stroke-width="1"/><ellipse cx="15" cy="6" rx="5" ry="4" fill="#f0c840" stroke="#c89820" stroke-width="1"/><path d="M8,6 v13 l3,-3 l2,4 l1.5,-1 l-2,-4 h4z" fill="#f8f8f8" stroke="#333" stroke-width="1.1"/></svg>
<svg style="left:1154px;top:926px" width="22" height="20"><path d="M1,18 l9,-12 h4 v12z" fill="#cfe2f8" stroke="#3a7ad0" stroke-width="1.4"/><path d="M2,13 h9 M2,16 h9" stroke="#3a7ad0" stroke-width="1.2"/><path d="M12,1 l7,7 M19,1 l-7,7" stroke="#d03030" stroke-width="2.2"/><path d="M12,9 v11 l2.5,-2.5 l2,3.5 l1.2,-0.8 l-2,-3.5 h3.5z" fill="#f8f8f8" stroke="#333" stroke-width="1"/></svg>
<svg style="left:1182px;top:926px" width="22" height="20"><rect x="1" y="2" width="11" height="13" rx="1" fill="#f4c090" stroke="#c04060" stroke-width="1.3"/><path d="M3,6 h7 M3,9 h7" stroke="#c04060" stroke-width="1"/><path d="M6,15 v5" stroke="#333" stroke-width="1.2"/><path d="M12,8 v11 l2.5,-2.5 l2,3.5 l1.2,-0.8 l-2,-3.5 h3.5z" fill="#f8f8f8" stroke="#333" stroke-width="1"/></svg>
<svg style="left:1209px;top:926px" width="22" height="20"><path d="M2,4 l6,-3 v15 l-6,3z" fill="#8ab8f0" stroke="#2a6ad0" stroke-width="1.3"/><path d="M8,1 h4 v15" fill="none" stroke="#2a6ad0" stroke-width="1.2"/><path d="M13,1 l7,7 M20,1 l-7,7" stroke="#d03030" stroke-width="2.2"/><path d="M11,9 v11 l2.5,-2.5 l2,3.5 l1.2,-0.8 l-2,-3.5 h3.5z" fill="#f8f8f8" stroke="#333" stroke-width="1"/></svg>
<svg style="left:1237px;top:925px" width="22" height="20"><path d="M6,1 v11 M1,6 h11 M6,1 l-2,2 M6,1 l2,2 M1,6 l2,-2 M1,6 l2,2 M12,6 l-2,-2 M12,6 l-2,2 M6,12 l-2,-2 M6,12 l2,-2" stroke="#222" stroke-width="1.6"/><path d="M10,7 v12 l2.5,-2.5 l2,3.5 l1.2,-0.8 l-2,-3.5 h3.5z" fill="#f8f8f8" stroke="#333" stroke-width="1"/></svg>
<svg style="left:1265px;top:927px" width="20" height="18"><circle cx="10" cy="9" r="6.5" fill="none" stroke="#c4c4c4" stroke-width="2.5" stroke-dasharray="2 1.4"/></svg>
<svg style="left:1291px;top:926px" width="24" height="20"><path d="M1.5,2 h17 l-6.5,8 v8 h-4 v-8z" fill="#f4f4f4" stroke="#444" stroke-width="1.5" stroke-linejoin="round"/></svg>
<div class="t" style="left:1310px;top:930px;font-size:12.5px;color:#444">:1</div>
<!-- ===== SYSTEM BROWSER ===== -->
<div class="a" style="left:840px;top:206px;width:486px;height:712px;background:#f0f0f0"></div>
<div class="a" style="left:840px;top:206px;width:1px;height:712px;background:#c6c6c6"></div>
<div class="a" style="left:841px;top:206px;width:1px;height:712px;background:#fafafa"></div>
<div class="t" style="left:846px;top:212.8px;font-size:13.8px;color:#505050">Диспетчер инженерных систем - Revit-Изоляция.rvt</div>
<div class="a" style="left:843px;top:230px;width:480px;height:1px;background:#c8c8c8"></div>
<div class="a" style="left:864px;top:235px;width:194px;height:25px;background:#e1e1e1;border:1px solid #c6c6c6"></div>
<div class="t" style="left:867.7px;top:240.7px;font-size:14px;color:#222">Системы</div>
<div class="a" style="left:1066px;top:235px;width:129px;height:25px;background:#e1e1e1;border:1px solid #c6c6c6"></div>
<div class="t" style="left:1069.5px;top:240.7px;font-size:14px;color:#222">Все категории</div>
<svg style="left:1307px;top:211px" width="15" height="14"><path d="M1.5,1.5 l11,11 M12.5,1.5 l-11,11" stroke="#111" stroke-width="2.2"/></svg>
<svg style="left:1041px;top:243px" width="13" height="8"><path d="M1,1 l5.5,5.5 l5.5,-5.5" fill="none" stroke="#555" stroke-width="1.3"/></svg>
<svg style="left:1178px;top:243px" width="13" height="8"><path d="M1,1 l5.5,5.5 l5.5,-5.5" fill="none" stroke="#555" stroke-width="1.3"/></svg>
<svg style="left:1211px;top:236px" width="20" height="20"><rect x="1.5" y="1.5" width="17" height="17" fill="#f4f4f4" stroke="#555" stroke-width="1.4"/><rect x="2.5" y="2.5" width="15" height="7" fill="#d8e8f8"/><path d="M3,6 l3.5,-3 v6z M17,6 l-3.5,-3 v6z" fill="#1f4aa0"/><path d="M6,6 h8" stroke="#9ab" stroke-width="1"/><path d="M3.5,12 h9 M3.5,15 h9" stroke="#aaa" stroke-width="1"/><path d="M13,19 l2.5,-4 h-2 l3.5,-4.5 l2,1 l-2.5,3 h2 l-4,5z" fill="#e8b030"/></svg>
<svg style="left:1236px;top:236px" width="22" height="21"><rect x="1.5" y="1.5" width="15" height="15.5" fill="#bcd8f6" stroke="#4a4a4a" stroke-width="1.6"/><path d="M6.5,2 v15 M11.5,2 v15" stroke="#2a5ab0" stroke-width="1.6"/><rect x="3" y="3" width="2.5" height="13" fill="#f4f8fc"/><path d="M17,5 q4,0 4,4 l-2,1.5 v8 h-3.5 v-8 l-2,-1.5 q0,-4 3.5,-4z" fill="#e8ecf0" stroke="#555" stroke-width="1.2"/></svg>
<!-- table -->
<div class="a" style="left:843px;top:268px;width:481px;height:631px;background:#fff"></div>
<div class="t" style="left:849.5px;top:273px;font-size:13px;color:#333">Системы</div>
<div class="t" style="left:1037px;top:273px;font-size:13px;color:#333">Расход</div>
<div class="t" style="left:1090.5px;top:273px;font-size:13px;color:#333">Размер</div>
<div class="t" style="left:1150.5px;top:273px;font-size:13px;color:#333">Имя пространства</div>
<div class="t" style="left:1277px;top:273px;font-size:13px;color:#333;width:46px;overflow:hidden">Номер помещения</div>

<div class="a" style="left:844px;top:312px;width:480px;height:1px;background:#d4d4d4"></div>
<div class="a" style="left:844px;top:332px;width:480px;height:1px;background:#d4d4d4"></div>
<div class="a" style="left:844px;top:353px;width:480px;height:1px;background:#d4d4d4"></div>
<div class="a" style="left:844px;top:373px;width:480px;height:1px;background:#d4d4d4"></div>
<div class="a" style="left:844px;top:393px;width:480px;height:1px;background:#d4d4d4"></div>
<div class="a" style="left:844px;top:414px;width:480px;height:1px;background:#d4d4d4"></div>
<div class="a" style="left:844px;top:434px;width:480px;height:1px;background:#d4d4d4"></div>
<div class="a" style="left:844px;top:454px;width:480px;height:1px;background:#d4d4d4"></div>
<div class="a" style="left:1028px;top:270px;width:1px;height:22px;background:#ececec"></div>
<div class="a" style="left:1028px;top:292px;width:1px;height:162px;background:#d4d4d4"></div>
<div class="a" style="left:1085px;top:270px;width:1px;height:22px;background:#ececec"></div>
<div class="a" style="left:1085px;top:292px;width:1px;height:162px;background:#d4d4d4"></div>
<div class="a" style="left:1145px;top:270px;width:1px;height:22px;background:#ececec"></div>
<div class="a" style="left:1145px;top:292px;width:1px;height:162px;background:#d4d4d4"></div>
<div class="a" style="left:1271px;top:270px;width:1px;height:22px;background:#ececec"></div>
<div class="a" style="left:1271px;top:292px;width:1px;height:162px;background:#d4d4d4"></div>
<div class="a" style="left:844px;top:373px;width:480px;height:20px;background:#0735c8"></div>
<div class="a" style="left:1028px;top:373px;width:1px;height:20px;background:#3a62e0"></div>
<div class="a" style="left:1085px;top:373px;width:1px;height:20px;background:#3a62e0"></div>
<div class="a" style="left:1145px;top:373px;width:1px;height:20px;background:#3a62e0"></div>
<div class="a" style="left:1271px;top:373px;width:1px;height:20px;background:#3a62e0"></div>
<div class="a" style="left:853px;top:309px;width:1px;height:135px;background:repeating-linear-gradient(#0000 0 1px,#a0a0a0 1px 2px)"></div>
<div class="a" style="left:854px;top:322px;width:13px;height:1px;background:repeating-linear-gradient(90deg,#0000 0 1px,#a0a0a0 1px 2px)"></div>
<div class="a" style="left:854px;top:343px;width:13px;height:1px;background:repeating-linear-gradient(90deg,#0000 0 1px,#a0a0a0 1px 2px)"></div>
<div class="a" style="left:854px;top:444px;width:13px;height:1px;background:repeating-linear-gradient(90deg,#0000 0 1px,#a0a0a0 1px 2px)"></div>
<div class="a" style="left:860px;top:303px;width:7px;height:1px;background:repeating-linear-gradient(90deg,#0000 0 1px,#a0a0a0 1px 2px)"></div>
<div class="a" style="left:877px;top:368px;width:1px;height:56px;background:repeating-linear-gradient(#0000 0 1px,#a0a0a0 1px 2px)"></div>
<div class="a" style="left:901px;top:388px;width:1px;height:6px;background:repeating-linear-gradient(#0000 0 1px,#7f90d0 1px 2px)"></div>
<div class="a" style="left:901px;top:394px;width:1px;height:30px;background:repeating-linear-gradient(#0000 0 1px,#a0a0a0 1px 2px)"></div>
<div class="a" style="left:902px;top:383px;width:13px;height:1px;background:repeating-linear-gradient(90deg,#0000 0 1px,#8aa0e0 1px 2px)"></div>
<div class="a" style="left:902px;top:424px;width:13px;height:1px;background:repeating-linear-gradient(90deg,#0000 0 1px,#a0a0a0 1px 2px)"></div>
<div class="a" style="left:884px;top:363px;width:7px;height:1px;background:repeating-linear-gradient(90deg,#0000 0 1px,#a0a0a0 1px 2px)"></div>
<div class="a" style="left:884px;top:404px;width:7px;height:1px;background:repeating-linear-gradient(90deg,#0000 0 1px,#a0a0a0 1px 2px)"></div>
<div class="a" style="left:848px;top:297px;width:11px;height:11px;border:1px solid #a8a8a8;background:linear-gradient(#fff,#e4e4e4)"></div>
<div class="a" style="left:850px;top:302px;width:7px;height:1px;background:#555"></div>
<div class="a" style="left:853px;top:299px;width:1px;height:7px;background:#555"></div>
<div class="a" style="left:848px;top:338px;width:11px;height:11px;border:1px solid #a8a8a8;background:linear-gradient(#fff,#e4e4e4)"></div>
<div class="a" style="left:850px;top:343px;width:7px;height:1px;background:#555"></div>
<div class="a" style="left:872px;top:358px;width:11px;height:11px;border:1px solid #a8a8a8;background:linear-gradient(#fff,#e4e4e4)"></div>
<div class="a" style="left:874px;top:363px;width:7px;height:1px;background:#555"></div>
<div class="a" style="left:872px;top:399px;width:11px;height:11px;border:1px solid #a8a8a8;background:linear-gradient(#fff,#e4e4e4)"></div>
<div class="a" style="left:874px;top:404px;width:7px;height:1px;background:#555"></div>
<svg style="left:868px;top:294px" width="18" height="16"><path d="M1.5,3.5 h5 l1.5,-2 h5 l1,2 h2.5 v11 h-15 z" fill="#fafafa" stroke="#707070" stroke-width="1.2"/><path d="M1.5,5 h15" stroke="#b0b0b0" stroke-width="1"/><text x="8" y="14.5" font-family="Liberation Sans" font-weight="bold" font-size="11" fill="#2a6ad0">?</text></svg>
<svg style="left:868px;top:314px" width="18" height="16"><path d="M1.5,3.5 h5 l1.5,-2 h5 l1,2 h2.5 v11 h-15 z" fill="#fafafa" stroke="#707070" stroke-width="1.2"/><path d="M1.5,5 h15" stroke="#b0b0b0" stroke-width="1"/></svg>
<svg style="left:868px;top:335px" width="18" height="16"><path d="M1.5,3.5 h5 l1.5,-2 h5 l1,2 h2.5 v11 h-15 z" fill="#fafafa" stroke="#707070" stroke-width="1.2"/><path d="M1.5,5 h15" stroke="#b0b0b0" stroke-width="1"/></svg>
<svg style="left:868px;top:436px" width="18" height="16"><path d="M1.5,3.5 h5 l1.5,-2 h5 l1,2 h2.5 v11 h-15 z" fill="#fafafa" stroke="#707070" stroke-width="1.2"/><path d="M1.5,5 h15" stroke="#b0b0b0" stroke-width="1"/></svg>
<svg style="left:892px;top:354px" width="18" height="17"><path d="M2,7 h14 v7 h-14 z" fill="#e8eef8" stroke="#606870" stroke-width="1.2"/><circle cx="9" cy="6" r="4.5" fill="#fff" stroke="#3a78c8" stroke-width="1.4"/><path d="M7.5,3.8 l3.5,2.2 l-3.5,2.2z" fill="#2a68c0"/><path d="M3,15.5 h12" stroke="#2a4a80" stroke-width="1.6"/></svg>
<svg style="left:892px;top:395px" width="18" height="17"><path d="M2,7 h14 v7 h-14 z" fill="#e8eef8" stroke="#606870" stroke-width="1.2"/><circle cx="9" cy="6" r="4.5" fill="#fff" stroke="#3a78c8" stroke-width="1.4"/><path d="M7.5,3.8 l3.5,2.2 l-3.5,2.2z" fill="#2a68c0"/><path d="M3,15.5 h12" stroke="#2a4a80" stroke-width="1.6"/></svg>
<svg style="left:916px;top:374px" width="18" height="18"><path d="M4,2 h4 v3 h5 v6 h-3 v-3 h-2 v6 h-4 z" fill="none" stroke="#e8ecff" stroke-width="1.3"/><path d="M2,13 v3 h3 M16,13 v3 h-3 M13,3 h3 v3" fill="none" stroke="#e8ecff" stroke-width="1.1"/></svg>
<svg style="left:916px;top:415px" width="18" height="18"><path d="M4,2 h4 v3 h5 v6 h-3 v-3 h-2 v6 h-4 z" fill="none" stroke="#555" stroke-width="1.3"/><path d="M2,13 v3 h3 M16,13 v3 h-3 M13,3 h3 v3" fill="none" stroke="#555" stroke-width="1.1"/></svg>
<div class="t" style="left:892px;top:295.57225px;font-size:13.5px;color:#2a2a2a">Не назначено (0 э...</div>
<div class="t" style="left:892px;top:315.97225px;font-size:13.5px;color:#2a2a2a">Механизмы (Систе...</div>
<div class="t" style="left:892px;top:336.37225px;font-size:13.5px;color:#2a2a2a">Трубы (Систем : 2)</div>
<div class="t" style="left:916px;top:356.77225px;font-size:13.5px;color:#2a2a2a">T1</div>
<div class="t" style="left:941px;top:377.17225px;font-size:13.5px;color:#fff">T1 1</div>
<div class="t" style="left:1038px;top:377.17225px;font-size:12.5px;color:#fff">Не ра...</div>
<div class="t" style="left:916px;top:397.57225px;font-size:13.5px;color:#2a2a2a">T2</div>
<div class="t" style="left:941px;top:417.97225px;font-size:13.5px;color:#2a2a2a">T2 1</div>
<div class="t" style="left:1038px;top:417.97225px;font-size:12.5px;color:#2a2a2a">Не ра...</div>
<div class="t" style="left:892px;top:438.37225px;font-size:13.5px;color:#2a2a2a">Электросети (Сист...</div>
<!-- sys browser bottom scrollbar -->
<div class="a" style="left:843px;top:899px;width:481px;height:19px;background:#f0f0f0"></div>
<div class="a" style="left:863px;top:900px;width:371px;height:17px;background:#cdcdcd"></div>
<svg style="left:849px;top:903px" width="8" height="11"><path d="M6,1.5 l-4.5,4 l4.5,4" fill="none" stroke="#444" stroke-width="2"/></svg>
<svg style="left:1310px;top:903px" width="8" height="11"><path d="M2,1.5 l4.5,4 l-4.5,4" fill="none" stroke="#444" stroke-width="2"/></svg>

<!-- ===== TASKBAR ===== -->
<div class="a" style="left:0;top:953px;width:1778px;height:47px;background:#1b1b1b"></div>
<div class="a" style="left:346px;top:953px;width:55px;height:47px;background:#3a3a3a"></div>
<div class="a" style="left:64px;top:997px;width:47px;height:3px;background:#76b9ed"></div>
<div class="a" style="left:121px;top:997px;width:48px;height:3px;background:#76b9ed"></div>
<div class="a" style="left:178.5px;top:997px;width:47.5px;height:3px;background:#76b9ed"></div>
<div class="a" style="left:236px;top:997px;width:47px;height:3px;background:#76b9ed"></div>
<div class="a" style="left:294px;top:997px;width:47px;height:3px;background:#76b9ed"></div>
<div class="a" style="left:346.6px;top:997px;width:51.39999999999998px;height:3px;background:#76b9ed"></div>
<div class="a" style="left:408px;top:997px;width:47px;height:3px;background:#76b9ed"></div>
<svg style="left:18px;top:967px" width="20" height="20"><path d="M0,2.8 l8,-1.1 v7.5 h-8z M9.2,1.5 l10.8,-1.5 v9.2 h-10.8z M0,10.5 h8 v7.6 l-8,-1.1z M9.2,10.5 h10.8 v9.5 l-10.8,-1.5z" fill="#fff"/></svg>
<svg style="left:73px;top:962px" width="28" height="29"><g transform="translate(14,14.5)"><g fill="#ddeeff" stroke="#5a9ad8" stroke-width="1.5"><circle cx="7.50" cy="0.00" r="5"/><circle cx="3.75" cy="6.50" r="5"/><circle cx="-3.75" cy="6.50" r="5"/><circle cx="-7.50" cy="0.00" r="5"/><circle cx="-3.75" cy="-6.50" r="5"/><circle cx="3.75" cy="-6.50" r="5"/></g><circle r="6" fill="#fff"/><g stroke="#4a8ad0" stroke-width="1.2"><line x1="0" y1="0" x2="7.50" y2="0.00"/><line x1="0" y1="0" x2="3.75" y2="6.50"/><line x1="0" y1="0" x2="-3.75" y2="6.50"/><line x1="0" y1="0" x2="-7.50" y2="0.00"/><line x1="0" y1="0" x2="-3.75" y2="-6.50"/><line x1="0" y1="0" x2="3.75" y2="-6.50"/></g><circle r="2" fill="#4a8ad0"/></g></svg>
<svg style="left:130px;top:962px" width="28" height="29"><g transform="translate(14,14.5)"><circle r="13" fill="#db4437"/><path d="M0,0 L-11.26,6.5 A13,13 0 0 1 -11.26,-6.5 z" fill="#0f9d58"/><path d="M0,0 L-11.26,6.5 A13,13 0 0 0 11.26,6.5 L13,0 A13,13 0 0 0 11.26,-6.5z" fill="#f4c20d"/><path d="M0,0 L11.26,-6.5 A13,13 0 0 0 -11.26,-6.5z" fill="#db4437"/><path d="M-11.26,6.5 A13,13 0 0 0 1,13 L4,3z" fill="#0f9d58"/><circle r="6" fill="#fff"/><circle r="4.6" fill="#4285f4"/></g></svg>
<svg style="left:188px;top:964px" width="28" height="24"><path d="M1,3 h9 l2,2 h13 v17 h-24z" fill="#f0c040"/><path d="M1,7 h24 v15 h-24z" fill="#f8d468"/><path d="M7,21 v-7 h12 v7 h-3 v-4 h-6 v4z" fill="#2a78d0"/></svg>
<svg style="left:247px;top:963px" width="25" height="28"><path d="M2.5,14 q0,-12 11,-12 q10,0 10,11 v2.5 h-15 q0.5,6 7,6 q4,0 7,-2 v5 q-3,2 -8,2 q-12,0 -12,-12.5z M8.8,11 h9 q-0.5,-4.5 -4.5,-4.5 q-4,0 -4.5,4.5z" fill="#1e7ad8"/><path d="M2,12 q4,-8 12,-6" fill="none" stroke="#1e7ad8" stroke-width="2"/></svg>
<svg style="left:302px;top:962px" width="27" height="27"><rect x="1" y="1" width="25" height="25" rx="3" fill="#f8d0a8"/><rect x="1" y="1" width="25" height="25" rx="3" fill="none" stroke="#e8a070" stroke-width="1"/><text x="4" y="16" font-family="Liberation Sans" font-weight="bold" font-size="14" fill="#c8402a">P</text><path d="M12,14 l12,3 l-2,8 l-11,-2z" fill="#fff4e8" stroke="#e0a080" stroke-width="1"/><circle cx="17" cy="19" r="2.5" fill="#e87040"/></svg>
<div class="a" style="left:346.6px;top:954px;width:51.4px;height:43px;background:#383838"></div>
<div class="a" style="left:398px;top:954px;width:5px;height:43px;background:#2a2a2a"></div>
<svg style="left:360px;top:963px" width="28" height="28"><defs><linearGradient id="rbg" x1="0" y1="0" x2="1" y2="1"><stop offset="0" stop-color="#f4f8fc"/><stop offset="1" stop-color="#cfe2f4"/></linearGradient><linearGradient id="rg2" x1="0" y1="0" x2="1" y2="1"><stop offset="0" stop-color="#1f4a98"/><stop offset="1" stop-color="#4a8ad0"/></linearGradient></defs><rect x="0" y="0" width="28" height="28" fill="url(#rbg)"/><path d="M7,4 h8 q7,0 7,6.5 q0,4.5 -4,6 l5,8 h-5.5 l-4,-7 h-1.5 v7 h-5 z M12,8 v5 h2.5 q3,0 3,-2.5 q0,-2.5 -3,-2.5 z" fill="url(#rg2)"/></svg>
<svg style="left:416px;top:962px" width="30" height="28"><ellipse cx="16" cy="13" rx="12" ry="12" fill="#5a6a88" stroke="#8aa0c0" stroke-width="1.2" opacity=".9"/><circle cx="14" cy="15" r="9" fill="#c82a20"/><path d="M5,13 h18" stroke="#901810" stroke-width="3"/><text x="9" y="20" font-family="Liberation Sans" font-size="7" fill="#f8c0a0">ст</text></svg>
<svg style="left:1518px;top:970px" width="16" height="10"><path d="M1.5,8.5 l6.5,-6.5 l6.5,6.5" fill="none" stroke="#eee" stroke-width="1.3"/></svg>
<svg style="left:1543px;top:968px" width="20" height="16"><rect x="4" y="1.5" width="15" height="10" fill="none" stroke="#eee" stroke-width="1.2"/><path d="M8,14.5 h8 M12,11.5 v3" stroke="#eee" stroke-width="1.2"/><path d="M1.5,2 v13" stroke="#eee" stroke-width="1.1"/><rect x="0" y="1" width="3" height="3.5" fill="none" stroke="#eee" stroke-width="1"/></svg>
<svg style="left:1571px;top:967px" width="20" height="18"><path d="M2,6 h3 l5,-4 v14 l-5,-4 h-3z" fill="none" stroke="#eee" stroke-width="1.2"/><path d="M12.5,6.5 q1.5,2.5 0,5 M15,4.5 q3,4.5 0,9 M17.5,2.5 q4,6.5 0,13" fill="none" stroke="#eee" stroke-width="1.1"/></svg>
<svg style="left:1731px;top:963px" width="32" height="33"><path d="M2,2 h20 v14 h-9 l-5,4 v-4 h-6z" fill="#fff"/><path d="M10,5 l10,-4 l10,4 v8 l-10,4 l-10,-4z" fill="#3a5a9a" opacity=".85"/><text x="13" y="12" font-family="Liberation Sans" font-size="7" fill="#fff">CSO</text><circle cx="21" cy="24" r="7.5" fill="#222" stroke="#777" stroke-width="1.3"/><text x="18" y="28.5" font-family="Liberation Sans" font-size="11" fill="#fff">1</text></svg>
<div class="a" style="left:1774px;top:954px;width:1px;height:46px;background:#555"></div>
<div class="t" style="left:1604px;top:973px;font-size:12.5px;color:#fff">РУС</div>
<div class="t" style="left:1661px;top:960.7px;font-size:13px;color:#fff">11:32</div>
<div class="t" style="left:1645.5px;top:981.8px;font-size:13px;color:#fff">16.06.2020</div>

<!-- ===== DIALOG ===== -->
<div class="a" style="left:1382px;top:130px;width:348px;height:443px;background:#f0f0f0;border:1px solid #aaa"></div>
<div class="a" style="left:1383px;top:131px;width:346px;height:33px;background:#fff"></div>
<div class="t" style="left:1414.5px;top:141px;font-size:14px;color:#222">Изоляция</div>
<svg style="left:1392px;top:139px" width="17" height="15"><ellipse cx="8.5" cy="7.5" rx="7.5" ry="6.5" fill="#4a5a78" stroke="#8090b0" stroke-width="0.8"/><circle cx="8" cy="8.5" r="5" fill="#c02820"/><path d="M3,7 h10" stroke="#801810" stroke-width="1.5"/></svg>
<div class="a" style="left:1588px;top:146px;width:12px;height:1.3px;background:#111"></div>
<div class="a" style="left:1642px;top:141.5px;width:11.5px;height:11.5px;border:1.2px solid #111"></div>
<svg style="left:1695px;top:141px" width="14" height="14"><path d="M1.5,1.5 l11,11 M12.5,1.5 l-11,11" stroke="#111" stroke-width="1.2"/></svg>

<div class="a" style="left:1383px;top:164px;width:346px;height:27px;background:#f8f8f8"></div>
<div class="t" style="left:1399.4px;top:171px;font-size:13.6px;color:#222">Настройки</div>
<div class="t" style="left:1488px;top:171px;font-size:13.6px;color:#222">Справка</div>
<div class="a" style="left:1383px;top:191px;width:346px;height:33px;background:linear-gradient(#fafafa,#ececec)"></div>
<div class="a" style="left:1383px;top:223px;width:343px;height:316px;background:#fff;border:1px solid #a0a0a0"></div>
<div class="a" style="left:1385px;top:226px;width:339px;height:14px;background:#0070d7"></div>
<div class="t" style="left:1387px;top:227.5px;font-size:12px;color:#fff">T2 1</div>
<div class="t" style="left:1387px;top:242.2px;font-size:12px;color:#222">T1 1</div>
<div class="a" style="left:1622px;top:547px;width:104px;height:21px;background:#e1e1e1;border:1px solid #adadad"></div>
<div class="t" style="left:1624px;top:550.5px;font-size:14px;letter-spacing:0.75px;color:#111">Изоляция</div><svg style="left:1695px;top:552px" width="18" height="12"><path d="M1,6.5 h14 M11,3.5 l4,3 l-4,3" fill="none" stroke="#111" stroke-width="1.1"/></svg>
<svg style="left:1385px;top:196px" width="3" height="22"><g fill="#a8a8a8"><rect x="0" y="1" width="2" height="2"/><rect x="0" y="5" width="2" height="2"/><rect x="0" y="9" width="2" height="2"/><rect x="0" y="13" width="2" height="2"/><rect x="0" y="17" width="2" height="2"/></g></svg>
<svg style="left:1395px;top:200px" width="13" height="13"><path d="M6.5,1.5 v10 M1.5,6.5 h10" stroke="#b8b088" stroke-width="3.6" stroke-linecap="round"/><path d="M6.5,2.5 v8 M2.5,6.5 h8" stroke="#eae2b0" stroke-width="1.8" stroke-linecap="round"/></svg>
<svg style="left:1417px;top:201px" width="12" height="12"><path d="M2,2 l8,8 M10,2 l-8,8" stroke="#d06090" stroke-width="2.8" stroke-linecap="round"/></svg>
<svg style="left:1565px;top:414px" width="14" height="22"><path d="M1.5,1.5 v16 l4,-3.5 l3,6.5 l2.2,-1 l-3,-6.3 h5.3z" fill="#fff" stroke="#222" stroke-width="1.1" stroke-linejoin="round"/></svg>
</body></html>
